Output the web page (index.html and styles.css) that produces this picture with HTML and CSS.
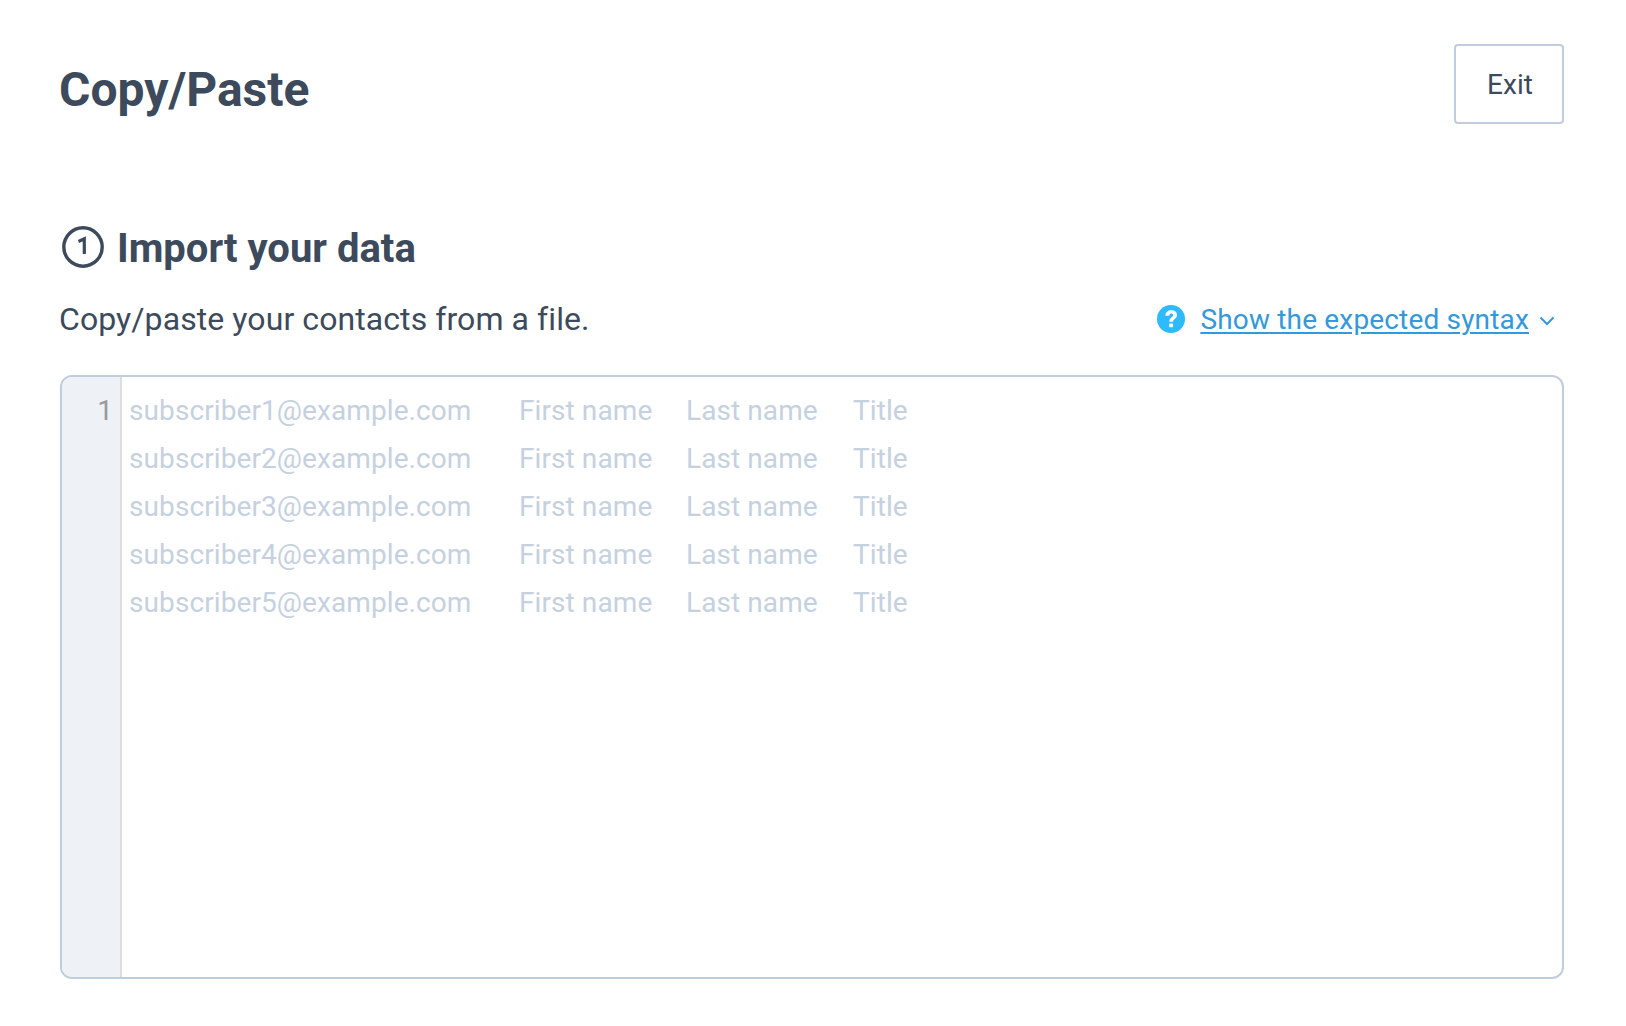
FILE: index.html
```html
<!DOCTYPE html>
<html lang="en">
<head>
<meta charset="utf-8">
<title>Copy/Paste</title>
<link rel="stylesheet" href="styles.css">
</head>
<body>
<main class="page">
  <header class="top">
    <h1 class="title">Copy/Paste</h1>
    <button class="exit" type="button">Exit</button>
  </header>
  <section class="step">
    <h2 class="step-title">
      <svg class="step-num" viewBox="0 0 42 42" aria-hidden="true"><circle cx="21" cy="21" r="19.2" fill="none" stroke="#3c4a5c" stroke-width="3.4"/><path d="M16.500 15.500 22.300 12.800V28" fill="none" stroke="#3c4a5c" stroke-width="3.200"/></svg>
      <span class="step-label">Import your data</span>
    </h2>
    <div class="step-row">
      <p class="lead">Copy/paste your contacts from a file.</p>
      <div class="syntax">
        <svg class="help" viewBox="0 0 28 28" aria-hidden="true"><circle cx="14" cy="14" r="14" fill="#2ebaff"/><path d="M8.300 10.800C8.500 7.200 11 5.300 14.300 5.300c3.400 0 5.700 2 5.700 4.800 0 3.900-4 3.900-4 6.700h-3.800c0-4.300 3.900-4.500 3.900-6.600 0-1-.8-1.600-1.800-1.600-1.200 0-1.900.8-2.100 2.200z" fill="#fff"/><rect x="12.200" y="18.400" width="3.800" height="3.800" rx=".7" fill="#fff"/></svg>
        <a class="syntax-link" href="#">Show the expected syntax</a>
        <svg class="chev" viewBox="0 0 16 10" aria-hidden="true"><path d="M1.500 1.500 8 8l6.500-6.500" fill="none" stroke="#3498db" stroke-width="2"/></svg>
      </div>
    </div>
    <div class="editor">
      <div class="gutter">1</div>
      <div class="lines">
        <div class="line"><span>subscriber1@example.com</span><span>First name</span><span>Last name</span><span>Title</span></div>
        <div class="line"><span>subscriber2@example.com</span><span>First name</span><span>Last name</span><span>Title</span></div>
        <div class="line"><span>subscriber3@example.com</span><span>First name</span><span>Last name</span><span>Title</span></div>
        <div class="line"><span>subscriber4@example.com</span><span>First name</span><span>Last name</span><span>Title</span></div>
        <div class="line"><span>subscriber5@example.com</span><span>First name</span><span>Last name</span><span>Title</span></div>
      </div>
    </div>
  </section>
</main>
</body>
</html>
```
FILE: styles.css
```css
* { box-sizing: border-box; }
html, body { margin: 0; height: 100%; background: #fff; }
body { font-family: Roboto, "Liberation Sans", sans-serif; color: #3c4a5c; }
.page { padding: 44px 62px 0 60px; }
.top { display: flex; justify-content: space-between; align-items: flex-start; height: 80px; }
.title { margin: 0 0 0 -1px; font-size: 48px; line-height: 92px; font-weight: 700; }
.exit { width: 110px; height: 80px; border: 2px solid #c0cddc; border-radius: 4px; background: #fff; color: #3c4a5c; font: 400 28px/1 Roboto, sans-serif; padding: 2px 0 0 2px; }
.step { margin-top: 100px; }
.step-title { display: flex; align-items: center; gap: 13px; margin: 0; height: 48px; font-size: 40px; line-height: 48px; font-weight: 700; }
.step-num { width: 42px; height: 42px; margin: 0 0 2px 2px; }
.step-label { margin-top: 2px; }
.step-row { display: flex; justify-content: space-between; align-items: center; margin-top: 22px; height: 50px; }
.lead { margin: 0 0 1px -1px; font-size: 32px; line-height: 50px; letter-spacing: .08px; }
.syntax { display: flex; align-items: center; padding-right: 8px; }
.help { width: 28px; height: 28px; margin-right: 15px; }
.syntax-link { margin-top: 2px; font-size: 28px; line-height: 50px; letter-spacing: .17px; color: #3498db; text-decoration: underline; text-underline-offset: 3px; }
.chev { width: 16px; height: 10px; margin: 3px 1px 0 10px; }
.editor { display: flex; height: 604px; margin-top: 31px; border: 2px solid #c0cddc; border-radius: 12px; overflow: hidden; }
.gutter { flex: 0 0 60px; background: #eef1f6; border-right: 2px solid #ddd; color: #999; font-size: 28px; line-height: 48px; text-align: right; padding: 10px 7px 0 0; }
.lines { padding: 10px 0 0 7px; color: #c5d1e0; font-size: 28px; line-height: 48px; letter-spacing: .09px; }
.line { display: grid; grid-template-columns: 390px 167px 167px auto; white-space: nowrap; }
```
